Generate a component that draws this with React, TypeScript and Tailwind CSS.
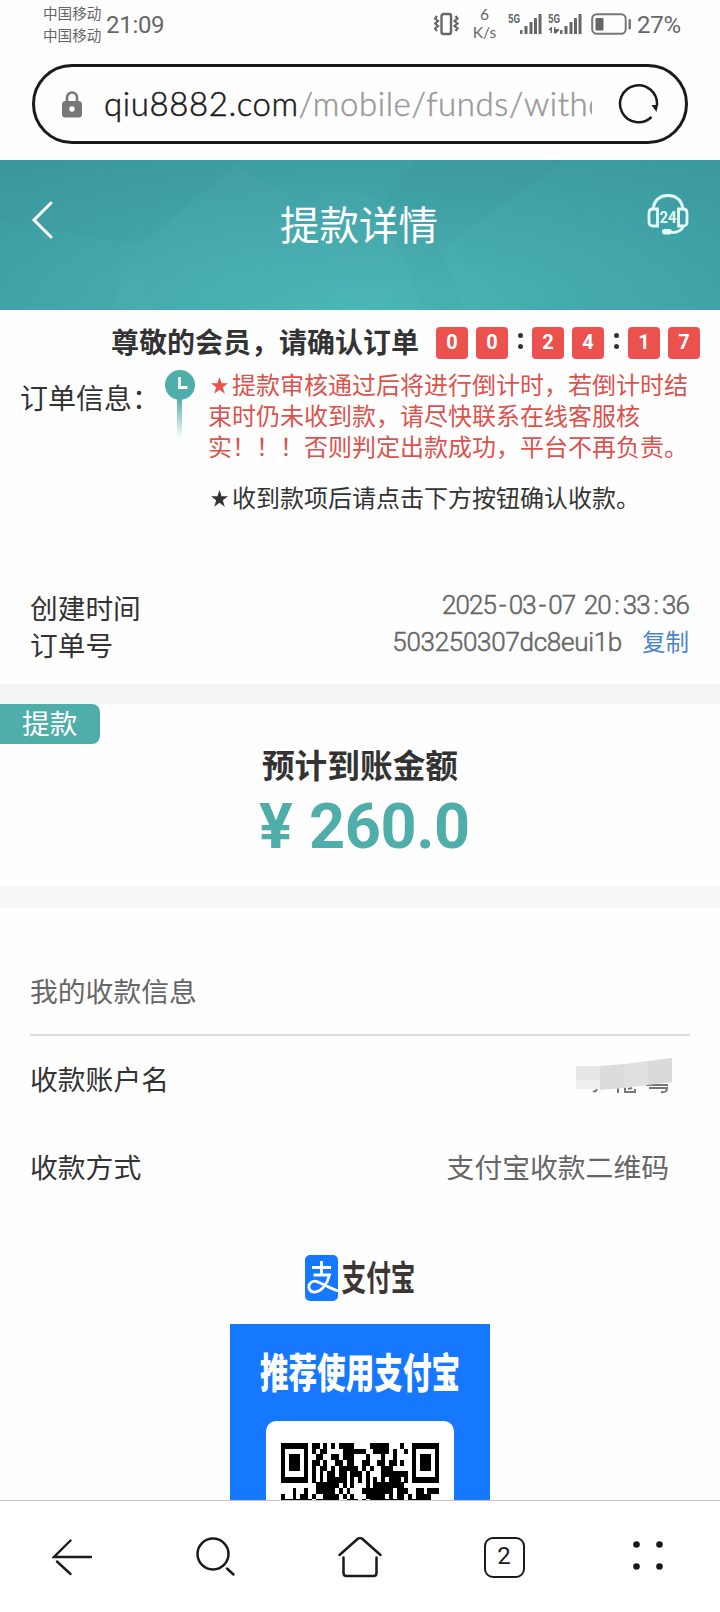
import React from 'react';

const SignalBars: React.FC<{ arrows?: boolean }> = ({ arrows }) => (
  <svg width="34" height="24" viewBox="0 0 34 24" fill="#666" className="shrink-0 overflow-visible">
    <text x="0" y="11" fontSize="12" fontWeight="700" fontFamily="Roboto, sans-serif" textLength="12" lengthAdjust="spacingAndGlyphs">5G</text>
    {arrows && (
      <path d="M0 18l3-3h1v6h-1.500v-3zM6 15h1.500v2l3.500 0v1.500l-3 3h-2z" />
    )}
    <rect x="12" y="18" width="2.500" height="4" rx="0.500" />
    <rect x="16.500" y="14" width="3" height="8" rx="0.500" />
    <rect x="21.500" y="10" width="3" height="12" rx="0.500" />
    <rect x="26" y="6" width="3" height="16" rx="0.500" />
    <rect x="30.500" y="2" width="3" height="20" rx="0.500" />
  </svg>
);

const StatusBar: React.FC = () => (
  <div className="flex h-16 items-start text-[#666]">
    <div className="ml-[43px] w-[58px] pt-[2px] text-[14.6px] leading-[22px] whitespace-nowrap">
      <div>中国移动</div>
      <div>中国移动</div>
    </div>
    <div className="ml-[5px] mt-[10px] w-[60px] font-['Roboto',sans-serif] text-[24px] leading-[30px] tracking-[-0.3px]">21:09</div>

    <div className="ml-auto flex items-start">
      <svg width="26" height="24" viewBox="0 0 26 24" fill="none" stroke="#666" className="mt-3 mr-[13px]">
        <rect x="7.500" y="2" width="9.500" height="20" rx="2" strokeWidth="2.400" />
        <path d="M3 4l-2 2.500 3 2.500-3 2.500 3 2.500-3 2.500 2 2.500M21.500 4l2 2.500-3 2.500 3 2.500-3 2.500 3 2.500-2 2.500" strokeWidth="2.200" />
      </svg>
      <div className="mr-[12px] w-[23px] pt-[5px] text-center font-['Lato',sans-serif] text-[15.500px] leading-[18px] whitespace-nowrap">
        <div>6</div>
        <div className="-mx-1">K/s</div>
      </div>
      <div className="mt-3 mr-[9px] flex gap-[6px]">
        <SignalBars />
        <SignalBars arrows />
      </div>
      <svg width="42" height="22" viewBox="0 0 42 22" className="mt-[13px] mr-[4px]">
        <rect x="1.200" y="1.200" width="33.500" height="19.600" rx="4.500" fill="none" stroke="#777" strokeWidth="2" />
        <rect x="4.500" y="5" width="8" height="12.500" rx="1" fill="#666" />
        <rect x="37.500" y="6" width="2.500" height="10.500" rx="1" fill="#777" />
      </svg>
      <div className="mt-[10px] mr-[37px] w-[46px] font-['Roboto',sans-serif] text-[24px] leading-[30px] tracking-[-0.2px]">27%</div>
    </div>
  </div>
);

const AddressBar: React.FC = () => (
  <div className="mx-8 flex h-20 items-center rounded-full border-[3px] border-[#1a1a1a]">
    <svg width="20" height="27" viewBox="0 0 20 27" className="ml-[27px] shrink-0">
      <path d="M5 12V6.500a5 5 0 0 1 10 0V12" fill="none" stroke="#777" strokeWidth="2.600" />
      <rect x="0" y="10" width="20" height="16.500" rx="3.500" fill="#777" />
      <circle cx="10" cy="18" r="2.700" fill="#fff" />
    </svg>
    <div className="-mt-[2px] ml-[22px] w-[488px] overflow-hidden whitespace-nowrap font-['Lato',sans-serif] text-[33px] leading-[50px] font-light tracking-[0.600px] text-[#1a1a1a] [-webkit-text-stroke:0.5px_currentColor]">
      qiu8882.com<span className="text-[#999]">/mobile/funds/withdraw</span>
    </div>
    <svg width="42" height="42" viewBox="0 0 42 42" fill="none" className="ml-[26px] shrink-0">
      <path d="M33.500 34A18.500 18.500 0 1 1 39 22" stroke="#1a1a1a" strokeWidth="2.500" />
      <path d="M33.500 22h6.500l-1.500 7z" fill="#1a1a1a" />
    </svg>
  </div>
);

const PageHeader: React.FC = () => (
  <header className="relative mt-4 flex h-[150px] justify-between bg-[radial-gradient(ellipse_80%_130%_at_50%_100%,#4ab5b6_0%,#43a6aa_50%,#3a989d_100%)]">
    <svg className="absolute inset-0" width="720" height="150" viewBox="0 0 720 150">
      <path d="M140 86L235 6 310 48 330 28 410 45 520 150H110z" fill="#fff" opacity="0.015" />
      <path d="M0 0h240L140 86 0 60z" fill="#000" opacity="0.010" />
      <path d="M380 45L415 0h150L440 90 465 150h-40z" fill="#000" opacity="0.014" />
      <path d="M110 150l20-60 25 60z" fill="#fff" opacity="0.015" />
    </svg>
    <svg width="22" height="38" viewBox="0 0 22 38" fill="none" stroke="#fff" strokeWidth="3" className="relative ml-[31px] mt-[41px]">
      <path d="M20 2L3 19l17 17" strokeLinecap="round" />
    </svg>
    <h1 className="relative ml-[18px] mt-[38px] text-[39.500px] leading-[50px] text-white">提款详情</h1>
    <svg width="42" height="42" viewBox="0 0 42 42" fill="none" stroke="#e4fbfb" strokeWidth="2.800" className="relative mr-[31px] mt-[33px]">
      <path d="M6 15C8 6 14 2.500 21 2.500S34 6 36 15M36.500 33c-2 5-7 6.500-12 6.500" />
      <path d="M10.500 16v17H6c-3 0-4-2-4-4v-9c0-2.500 1-4 4-4zM31.500 16v17H36c3 0 4-2 4-4v-9c0-2.500-1-4-4-4z" />
      <rect x="15" y="36" width="10" height="5.500" rx="2.700" fill="#e4fbfb" stroke="none" />
      <text x="12.500" y="30" fontSize="16" fontWeight="700" fill="#e4fbfb" stroke="none" fontFamily="Roboto, sans-serif" textLength="17" lengthAdjust="spacingAndGlyphs">24</text>
    </svg>
  </header>
);

const Digit: React.FC<{ value: string }> = ({ value }) => (
  <span className="flex h-8 w-8 items-center justify-center rounded-[4px] bg-[#eb514d] pb-[2px] font-['Roboto',sans-serif] text-[20px] font-bold text-white">
    {value}
  </span>
);

const Colon: React.FC = () => (
  <span className="flex h-8 w-6 flex-col items-center justify-center gap-[6px] pb-1">
    <i className="h-[5px] w-[5px] rounded-full bg-[#333]" />
    <i className="h-[5px] w-[5px] rounded-full bg-[#333]" />
  </span>
);

const Countdown: React.FC = () => (
  <div className="flex">
    <div className="flex gap-2"><Digit value="0" /><Digit value="0" /></div>
    <Colon />
    <div className="flex gap-2"><Digit value="2" /><Digit value="4" /></div>
    <Colon />
    <div className="flex gap-2"><Digit value="1" /><Digit value="7" /></div>
  </div>
);

const Star: React.FC = () => (
  <svg width="24" height="24" viewBox="0 0 24 24" fill="currentColor" className="inline-block align-[-4px]">
    <path d="M11.500 3l2.100 6.300h6.400l-5.200 3.900 2 6.500-5.300-4-5.300 4 2-6.500L3 9.300h6.400z" />
  </svg>
);

const OrderNotice: React.FC = () => (
  <section className="h-[282px] pt-[17px] text-[#333]">
    <div className="flex items-start justify-end pr-5">
      <h2 className="-mt-[2px] mr-[17px] text-[28px] leading-8 font-bold">尊敬的会员，请确认订单</h2>
      <Countdown />
    </div>
    <div className="flex">
      <div className="w-[165px] pl-5 pt-[18px] text-[28px] leading-10 whitespace-nowrap">订单信息：</div>
      <svg width="30" height="70" viewBox="0 0 30 70" fill="none" className="mt-[11px] shrink-0">
        <defs>
          <linearGradient id="tail" x1="0" y1="0" x2="0" y2="1">
            <stop offset="0" stopColor="#4fadaa" />
            <stop offset="1" stopColor="#4fadaa" stopOpacity="0" />
          </linearGradient>
        </defs>
        <rect x="12" y="28" width="5" height="40" fill="url(#tail)" />
        <circle cx="15" cy="15" r="15" fill="#4fadaa" />
        <path d="M14.500 7v10.500h8" stroke="#fff" strokeWidth="2.800" />
      </svg>
      <div className="ml-[13px] pt-[10px] text-[24px] leading-[30.9px] whitespace-nowrap">
        <p className="text-[#dc524d]">
          <span className="text-[#eb514d]"><Star /></span>提款审核通过后将进行倒计时，若倒计时结<br />
          束时仍未收到款，请尽快联系在线客服核<br />
          实！！！否则判定出款成功，平台不再负责。
        </p>
        <p className="mt-[20px]"><Star />收到款项后请点击下方按钮确认收款。</p>
      </div>
    </div>
  </section>
);

const OrderInfo: React.FC = () => (
  <section className="flex h-[92px] justify-between pl-[30px] pr-[31px] text-[27.700px] leading-[37px] text-[#333]">
    <div className="-mt-[3px]">
      <div>创建时间</div>
      <div>订单号</div>
    </div>
    <div className="-mt-[5px] text-right font-['Roboto','Noto_Sans_CJK_SC',sans-serif] text-[26px] text-[#666]">
      <div className="font-light whitespace-pre tracking-[-0.900px] [-webkit-text-stroke:0.5px_currentColor]">
        2025<span className="px-[3px]">-</span>03<span className="px-[3px]">-</span>07<span className="pl-[3px]"> </span>20<span className="pl-[3.500px] pr-[4px]">:</span>33<span className="pl-[3.500px] pr-[4px]">:</span>36
      </div>
      <div>
        <span className="font-light tracking-[-0.280px] [-webkit-text-stroke:0.5px_currentColor]">503250307dc8eui1b</span>
        <a className="ml-5 text-[23.500px] text-[#4a85cc]">复制</a>
      </div>
    </div>
  </section>
);

const Amount: React.FC = () => (
  <section className="h-[182px]">
    <div className="flex h-10 w-[100px] items-center rounded-r-lg bg-[#4fadaa] pb-[2px] pl-[22px] text-[27.700px] text-white">提款</div>
    <div className="-mt-[1px] text-center text-[32.700px] leading-[42px] font-bold text-[#333]">预计到账金额</div>
    <div className="ml-[259px] mt-[9px] flex items-center font-['Roboto',sans-serif] text-[63px] leading-[66px] font-bold text-[#4fadaa]">
      <span className="w-[50px]">¥</span>
      <span className="tracking-[-0.400px]">260.0</span>
    </div>
  </section>
);

const PayeeInfo: React.FC = () => (
  <section className="px-[30px] text-[27.800px] text-[#333]">
    <div className="h-32 border-b-2 border-[#dcdcdc] pt-[62px] leading-10 text-[#666]">我的收款信息</div>
    <div className="-mt-[1px] flex h-[88px] items-center justify-between pr-[18px]">
      <span>收款账户名</span>
      {/* smeared account name */}
      <svg width="96" height="40" viewBox="0 0 96 40" className="-mt-1">
        <path d="M17 34q3 2 4-3M42 31v5M49 30v5h10v-3M52 32l4-1M70 28h22M73 31h18q0 5-6 4" fill="none" stroke="#777" strokeWidth="2" />
        <rect x="0" y="9" width="24" height="20" fill="#e6e6e6" />
        <rect x="0" y="23" width="24" height="9" fill="#eee" />
        <path d="M24 9l24-2v24l-24 2z" fill="#dcdcdc" />
        <path d="M48 7l24-3v24l-24 3z" fill="#e0e0e0" />
        <path d="M72 4l24-3v24l-24 3z" fill="#dadada" />
      </svg>
    </div>
    <div className="flex h-[89px] items-center justify-between pb-[2px] pr-[21px]">
      <span>收款方式</span>
      <span className="text-[#666]">支付宝收款二维码</span>
    </div>
  </section>
);

const QR_ROWS = [
  '#######.##.#.#.####....#####...#..#######',
  '#.....#.#.##....######..####.#..#.#.....#',
  '#.###.#..##..##.###...#...#..#....#.###.#',
  '#.###.#.##.#..##.##..##..##.##.#..#.###.#',
  '#.###.#.#.##.#.#####.#.#..###.....#.###.#',
  '#.....#.#.#.##.##.###.#...#######.#.....#',
  '#######.#.#.#####.#.#.#.#.#.###.#.#######',
  '.........######.#.#...#.########.........',
  '...#..#..#####.#.#...########.###..##.###',
  '#..#.##.#..####.#.#...#####.#.##.#.####..',
  '########.######..###.#.#########.######..',
];

const QrCode: React.FC = () => (
  <svg width="158" height="62" viewBox="0 0 41 11" preserveAspectRatio="none" shapeRendering="crispEdges">
    {QR_ROWS.flatMap((row, y) =>
      row.split('').map((c, x) => (c === '#' ? <rect key={`${x}-${y}`} x={x} y={y} width="1.02" height="1.02" /> : null)),
    )}
  </svg>
);

const AlipayPoster: React.FC = () => (
  <section className="flex h-[288px] flex-col items-center overflow-hidden">
    <div className="mt-[43px] flex h-[46px] items-center">
      <svg width="33" height="46" viewBox="0 0 33 46">
        <rect width="33" height="46" rx="5" fill="#1677ff" />
        <path d="M7 12.500h19M16.500 6v13M8.500 20h16c-2 8-7 16-14.500 17-6 .5-8-6-4-9.500C11 23 19 31 33 36" fill="none" stroke="#fff" strokeWidth="2.800" />
      </svg>
      <span className="mb-[3px] ml-1 origin-center scale-y-[1.42] text-[24.600px] leading-[25px] font-bold text-[#3c3635]">支付宝</span>
    </div>
    <div className="mt-[23px] flex h-[176px] w-[260px] flex-col items-center bg-[#1677ff]">
      <div className="mt-[32px] scale-y-[1.42] text-[28.600px] leading-[29px] font-black text-white">推荐使用支付宝</div>
      <div className="mt-[36px] flex h-20 w-[188px] justify-center rounded-t-[10px] bg-white pt-[22px]">
        <QrCode />
      </div>
    </div>
  </section>
);

const BottomNav: React.FC = () => (
  <nav className="grid h-28 grid-cols-5 justify-items-center border-t border-[#c8c8c8] bg-white pt-9">
    <svg width="40" height="40" viewBox="0 0 40 40" fill="none" stroke="#1a1a1a" strokeWidth="2.400" strokeLinecap="round">
      <path d="M39 20H2L18.500 3.500M5 24.500l13.500 12.500" />
    </svg>
    <svg width="40" height="40" viewBox="0 0 40 40" fill="none" stroke="#1a1a1a" strokeWidth="2.500" strokeLinecap="round">
      <circle cx="17" cy="17" r="15.500" />
      <path d="M31 31.500l6.500 6" />
    </svg>
    <svg width="44" height="42" viewBox="0 0 44 42" fill="none" stroke="#1a1a1a" strokeWidth="2.500" strokeLinecap="round" strokeLinejoin="round">
      <path d="M1.500 18L19.500 2q2.500-2 5 0l18 16M5.500 20.500V36q0 3 3 3h27q3 0 3-3V20.500" />
    </svg>
    <div className="flex h-[41px] w-[41px] items-center justify-center rounded-[9px] border-[2.500px] border-[#1a1a1a] pb-1 font-['Roboto',sans-serif] text-[24px] text-[#1a1a1a]">2</div>
    <svg width="32" height="40" viewBox="0 0 32 40" fill="#1a1a1a">
      <circle cx="4.500" cy="7.500" r="3.300" />
      <circle cx="27.500" cy="7.500" r="3.300" />
      <circle cx="4.500" cy="29.500" r="3.300" />
      <circle cx="27.500" cy="29.500" r="3.300" />
    </svg>
  </nav>
);

const App: React.FC = () => (
  <div className="h-[1612px] w-[720px] overflow-hidden bg-[#fefefe] font-['Noto_Sans_CJK_SC',sans-serif]">
    <StatusBar />
    <AddressBar />
    <PageHeader />
    <OrderNotice />
    <OrderInfo />
    <div className="h-5 bg-[#f4f4f4]" />
    <Amount />
    <div className="h-[22px] bg-[#f7f7f7]" />
    <PayeeInfo />
    <AlipayPoster />
    <BottomNav />
  </div>
);

export default App;
